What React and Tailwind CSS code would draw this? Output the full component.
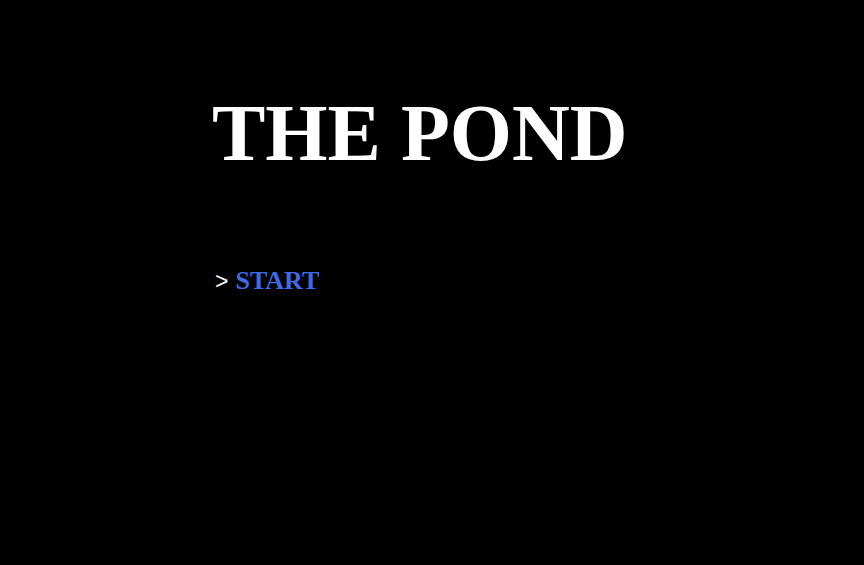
export default function App() {
  return (
    <div className="min-h-[565px] bg-black pl-[212px] pt-[85px] font-['Liberation_Serif',serif]">
      <h1 className="text-[80px] font-bold leading-[96px] text-white">THE POND</h1>
      <div className="mt-[84px] ml-[3px] flex items-baseline text-[26px] leading-[32px]">
        <span className="text-[23px] text-white font-['Liberation_Sans',sans-serif] font-normal">&gt;</span>
        <button className="ml-[7px] font-bold text-[#4169e1]">START</button>
      </div>
    </div>
  );
}
